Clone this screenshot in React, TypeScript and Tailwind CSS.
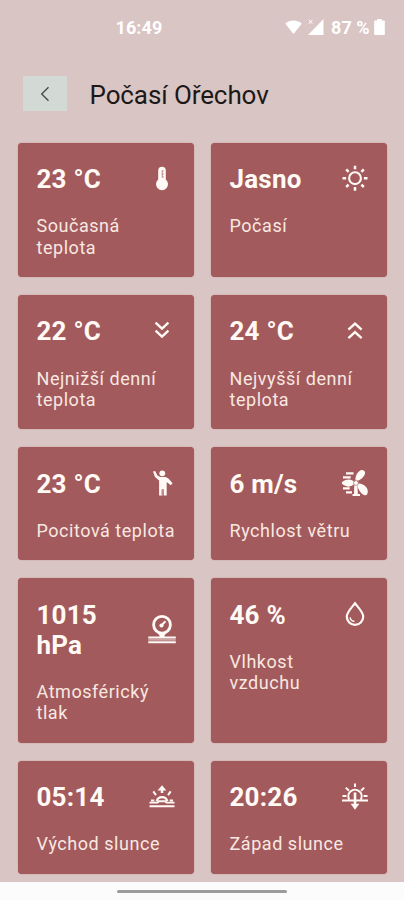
import type { ReactNode } from "react";

function Glyph({ children }: { children: ReactNode }) {
  return (
    <svg
      viewBox="0 0 28 28"
      className="h-7 w-7 shrink-0 overflow-visible"
      fill="none"
      stroke="currentColor"
      strokeWidth="2"
    >
      {children}
    </svg>
  );
}

const thermometer = (
  <Glyph>
    <path d="M10.200 5.600a3.800 3.800 0 0 1 7.600 0v9a6 6 0 1 1-7.600 0Z" fill="currentColor" stroke="none" />
    <path d="M14.200 5.500v7M14 6h1.800M14 9h1.800M14 12h1.800" stroke="#b98082" strokeWidth="0.9" />
  </Glyph>
);

const sun = (
  <Glyph>
    <circle cx="14" cy="13.200" r="5.900" strokeWidth="2.100" />
    <path
      d="M14 .7v3.600M14 22.100v3.600M1.500 13.200h3.600M22.900 13.200h3.600M5.200 4.400l2.400 2.400M20.400 19.600l2.400 2.400M22.800 4.400l-2.400 2.400M7.600 19.600l-2.400 2.400"
      strokeWidth="2.500"
    />
  </Glyph>
);

const chevronsDown = (
  <Glyph>
    <path d="m7.600 4.700 6.400 6 6.400-6M7.600 12.700l6.400 6 6.400-6" strokeWidth="2.400" />
  </Glyph>
);

const chevronsUp = (
  <Glyph>
    <path d="m7.400 11.700 6.600-6 6.600 6M7.400 20.100l6.600-6 6.600 6" strokeWidth="2.400" />
  </Glyph>
);

const person = (
  <Glyph>
    <circle cx="14.300" cy="3.300" r="2.900" fill="currentColor" stroke="none" />
    <path
      d="M5 1.600 7.200 1l2 4.300 3 1.700h5.500l2.700 1.600 4.200 4.600-1.900 2.100-4-3.400v13.700h-3v-6.400h-1.600v6.400h-3V10.400L7 7.100Z"
      fill="currentColor"
      stroke="none"
    />
    <path d="M13.400 19.400h1.600v6h-1.600Z" fill="#c58f91" stroke="none" />
  </Glyph>
);

const windTurbine = (
  <Glyph>
    <g transform="translate(0 -0.6)">
      <g fill="currentColor" stroke="none">
        <path d="M14.600 12.300c-.9-4.800 1.600-10 4.700-11.300 2.200-.9 4.900.4 4.800 2.700-.1 3.200-4.800 7.600-9.500 8.600Z" />
        <path d="M14 13.400c-2.200-3.200-6.400-4-9.200-2.800-1.700.8-4 1.500-4 3.100s2.600 2.200 4.200 3c3 1.300 7 .2 9-3.300Z" />
        <path d="M15.800 14.200c4-.4 8.800 1.700 10.300 4.900 1.100 2.400 1 5.900-1.100 6.700-3.200 1.200-8.100-4.900-9.200-11.600Z" />
        <path d="M13.300 14.500h3l.6 10.200H19v1.800h-7.500v-1.800H13Z" />
        <circle cx="15" cy="13.500" r="2" />
      </g>
      <path d="M5 4h7.500M2 8h7.700M2 19h6.700M5 23h6" strokeWidth="2.400" />
      <circle cx="15" cy="13.400" r="2.600" stroke="#bd8587" strokeWidth="0.8" />
    </g>
  </Glyph>
);

const gauge = (
  <Glyph>
    <g transform="translate(0 -1)">
      <circle cx="14" cy="9.700" r="8.400" strokeWidth="2.800" />
      <path d="m13 10.700 4.500-4.500" strokeWidth="2" />
      <circle cx="13.500" cy="10.500" r="2.100" fill="currentColor" stroke="none" />
      <path d="m8.800 17 2.700 3.500v2h5v-2l2.700-3.500Z" fill="currentColor" stroke="none" />
      <path d="M.3 22.500h27.500M.3 27.300h27.500" strokeWidth="2" />
      <path d="M.3 24.900h27.500" stroke="#dcbebe" strokeWidth="1.300" />
    </g>
  </Glyph>
);

const droplet = (
  <Glyph>
    <path d="M14 2.300c-3.700 4.700-8.200 8.900-8.200 13.400a8.200 8.200 0 0 0 16.400 0c0-4.500-4.500-8.700-8.200-13.400Z" strokeWidth="2.200" />
    <path d="M9.100 16.300c.4 2.400 2 3.900 4.400 4" strokeWidth="1.400" />
  </Glyph>
);

const sunrise = (
  <Glyph>
    <path d="M14 10V5.500" strokeWidth="2.500" />
    <path d="m14 2.200 4.400 5.300H9.600Z" fill="currentColor" stroke="none" />
    <path d="M8.700 18.200a5.500 5.500 0 0 1 10.600 0" strokeWidth="2.200" />
    <path d="m5.300 8.400 2.700 3.800M22.700 8.400 20 12.200M3 17.400h3.300M21.700 17.400H25" strokeWidth="2" />
    <path d="M1.500 19.600h8l1.200-1.300h6.600l1.200 1.300h8M1.500 23.300h25" strokeWidth="1.900" />
  </Glyph>
);

const sunset = (
  <Glyph>
    <path d="M8.300 16.700a6.600 6.600 0 1 1 11.400 0" strokeWidth="2" />
    <path d="M14 .4V4M4.800 4.600 8 7.700M23.200 4.600 20 7.700M1.500 13.100h4M22.500 13.100h4M1 17.500h26" strokeWidth="2" />
    <path d="M14 9.500v12" strokeWidth="2.600" />
    <path d="M9.600 20.800h8.800L14 26.700Z" fill="currentColor" stroke="none" />
  </Glyph>
);

type Reading = { value: string; label: string; icon: ReactNode; narrow?: boolean };

const readings: Reading[] = [
  { value: "23 °C", label: "Současná teplota", icon: thermometer },
  { value: "Jasno", label: "Počasí", icon: sun },
  { value: "22 °C", label: "Nejnižší denní teplota", icon: chevronsDown },
  { value: "24 °C", label: "Nejvyšší denní teplota", icon: chevronsUp },
  { value: "23 °C", label: "Pocitová teplota", icon: person },
  { value: "6 m/s", label: "Rychlost větru", icon: windTurbine },
  { value: "1015 hPa", label: "Atmosférický tlak", icon: gauge, narrow: true },
  { value: "46 %", label: "Vlhkost vzduchu", icon: droplet, narrow: true },
  { value: "05:14", label: "Východ slunce", icon: sunrise },
  { value: "20:26", label: "Západ slunce", icon: sunset },
];

function ReadingCard({ value, label, icon, narrow }: Reading) {
  return (
    <article className="rounded-[4px] bg-[#a35a5c] pt-[21.5px] pr-[18.2px] pb-[19px] pl-[18.5px] text-[#fffaf5] shadow-[0_0_1px_#a35a5c]">
      <div className="flex items-center justify-between">
        <div className="max-w-[100px] text-[26px] leading-[30.3px] font-bold tracking-[0.2px]">{value}</div>
        {icon}
      </div>
      <div
        className={`mt-[20.9px] text-[18px] leading-[21.3px] tracking-[0.54px] text-[#f8e8e1] ${
          narrow ? "max-w-[115px]" : "-mr-2"
        }`}
      >
        {label}
      </div>
    </article>
  );
}

function StatusBar() {
  return (
    <div className="flex h-[54px] items-center justify-between pr-[19.5px] pl-[115.5px] text-[18px] font-bold text-white">
      <span className="tracking-[0.1px]">16:49</span>
      <div className="flex items-center">
        <svg viewBox="0 0 17 14" className="mr-[6px] h-[14px] w-[17px]" fill="currentColor">
          <path d="M.3 3.8C4.5-.5 12.5-.5 16.7 3.8L8.5 14Z" />
        </svg>
        <svg viewBox="0 0 16 16" className="mr-[7px] h-4 w-4" fill="currentColor">
          <path d="M15.5 0v16H0Z" />
          <path d="m.8.8 3.5 4m0-4-3.5 4" stroke="currentColor" strokeWidth="1" />
        </svg>
        <span className="mr-[4px]">87 %</span>
        <svg viewBox="0 0 12 16" className="h-4 w-[11px]" fill="currentColor" preserveAspectRatio="none">
          <path d="M3.5 0h5v1.5H11a.8.8 0 0 1 .8.8v12.900a.8.8 0 0 1-.8.8H1a.8.8 0 0 1-.8-.8V2.300a.8.8 0 0 1 .8-.8h2.500Z" />
        </svg>
      </div>
    </div>
  );
}

export default function App() {
  return (
    <div className="flex h-[900px] w-[404px] flex-col overflow-hidden bg-[#d9c5c3] font-[Roboto,'Noto_Sans',sans-serif]">
      <StatusBar />
      <header className="flex h-[88.6px] items-center pb-[9px] pl-[23px]">
        <button className="flex h-[35px] w-[44px] items-center justify-center bg-[#d3d9d5]" aria-label="Zpět">
          <svg viewBox="0 0 10 16" className="h-4 w-[10px]" fill="none" stroke="#4b4d4c" strokeWidth="1.400">
            <path d="M8.500 1.200 1.700 8l6.800 6.800" />
          </svg>
        </button>
        <h1 className="ml-[22.5px] pt-[2px] text-[26px] leading-[32px] font-normal tracking-[-0.1px] text-[#1c1818]">
          Počasí Ořechov
        </h1>
      </header>
      <main className="grid grid-cols-[176px_176px] gap-x-[17px] gap-y-[18px] pl-[18px]">
        {readings.map((reading) => (
          <ReadingCard key={reading.label} {...reading} />
        ))}
      </main>
      <footer className="mt-auto flex h-[18px] shrink-0 items-center justify-center bg-[#fcfcfc]">
        <div className="h-[3px] w-[170px] rounded-full bg-[#9b9c9d]" />
      </footer>
    </div>
  );
}
